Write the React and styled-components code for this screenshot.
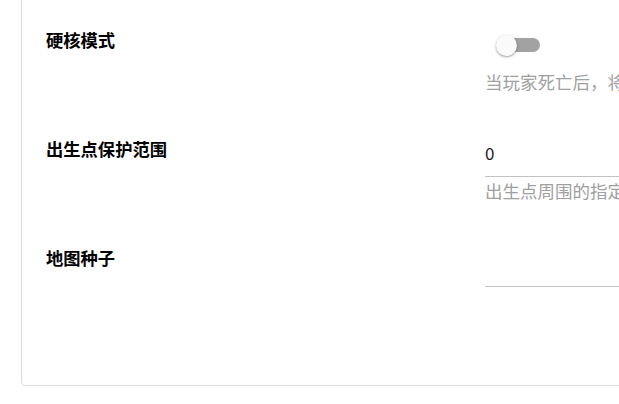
import React, { useState } from "react";
import styled, { createGlobalStyle } from "styled-components";

const GlobalStyle = createGlobalStyle`
   html, body {
      margin: 0;
      padding: 0;
      background: #fff;
      overflow: hidden;
   }
   body {
      font-family: "Noto Sans CJK SC", "Noto Sans", sans-serif;
   }
`;

const Pagina = styled.div`
   width: 619px;
   height: 404px;
   overflow: hidden;
`;

const Tarjeta = styled.div`
   width: 720px;
   margin: -10px 0 0 21px;
   padding: 36px 0 0 24px;
   border: 1px solid #dcdcdc;
   border-radius: 4px;
   box-sizing: border-box;
   background: #fff;
`;

const Fila = styled.div`
   display: grid;
   grid-template-columns: 439px 1fr;
   align-items: start;
   height: ${(p) => p.$alto}px;
`;

const Etiqueta = styled.div`
   font-size: 17.3px;
   line-height: 26px;
   font-weight: 700;
   color: #000;
`;

const Control = styled.div`
   display: flex;
   flex-direction: column;
   align-items: flex-start;
   overflow: hidden;
`;

const Interruptor = styled.button`
   position: relative;
   width: 56px;
   height: 21px;
   margin-top: 8px;
   padding: 0;
   border: none;
   background: transparent;
   cursor: pointer;
`;

const Pista = styled.span`
   position: absolute;
   left: 15px;
   top: 3px;
   width: 40px;
   height: 14px;
   border-radius: 7px;
   background: ${(p) => (p.$activo ? "#90caf9" : "#a2a2a2")};
`;

const Perilla = styled.span`
   position: absolute;
   top: 0;
   left: ${(p) => (p.$activo ? "35px" : "11px")};
   width: 21px;
   height: 21px;
   border-radius: 50%;
   background: ${(p) => (p.$activo ? "#1976d2" : "#fafafa")};
   box-shadow: 0 1px 3px rgba(0, 0, 0, 0.3), 0 1px 1px rgba(0, 0, 0, 0.14);
   transition: left 0.15s;
`;

const Ayuda = styled.div`
   margin-top: ${(p) => p.$arriba}px;
   font-size: 17.5px;
   line-height: 23px;
   color: #a0a0a0;
   white-space: nowrap;
`;

const Campo = styled.div`
   width: 100%;
   height: ${(p) => p.$alto}px;
   border-bottom: 1px solid #c2c2c2;
`;

const Entrada = styled.input`
   width: 100%;
   border: none;
   outline: none;
   padding: 4px 0 0;
   margin: 0;
   font-family: "Noto Sans CJK SC", "Noto Sans", sans-serif;
   font-size: 17px;
   line-height: 26px;
   color: #1a1a1a;
   background: transparent;
`;

const App = () => {
   const [hardcore, setHardcore] = useState(false);
   const [proteccion, setProteccion] = useState("0");
   const [semilla, setSemilla] = useState("");

   return (
      <Pagina>
         <GlobalStyle />
         <Tarjeta>
            <Fila $alto={109}>
               <Etiqueta>硬核模式</Etiqueta>
               <Control>
                  <Interruptor onClick={() => setHardcore(!hardcore)}>
                     <Pista $activo={hardcore} />
                     <Perilla $activo={hardcore} />
                  </Interruptor>
                  <Ayuda $arriba={14}>当玩家死亡后，将会被设置为旁观者模式</Ayuda>
               </Control>
            </Fila>

            <Fila $alto={109}>
               <Etiqueta>出生点保护范围</Etiqueta>
               <Control>
                  <Campo $alto={40}>
                     <Entrada value={proteccion} onChange={(e) => setProteccion(e.target.value)} />
                  </Campo>
                  <Ayuda $arriba={2}>出生点周围的指定范围内无法破坏方块</Ayuda>
               </Control>
            </Fila>

            <Fila $alto={140}>
               <Etiqueta>地图种子</Etiqueta>
               <Control>
                  <Campo $alto={41}>
                     <Entrada value={semilla} onChange={(e) => setSemilla(e.target.value)} />
                  </Campo>
               </Control>
            </Fila>
         </Tarjeta>
      </Pagina>
   );
};

export default App;
